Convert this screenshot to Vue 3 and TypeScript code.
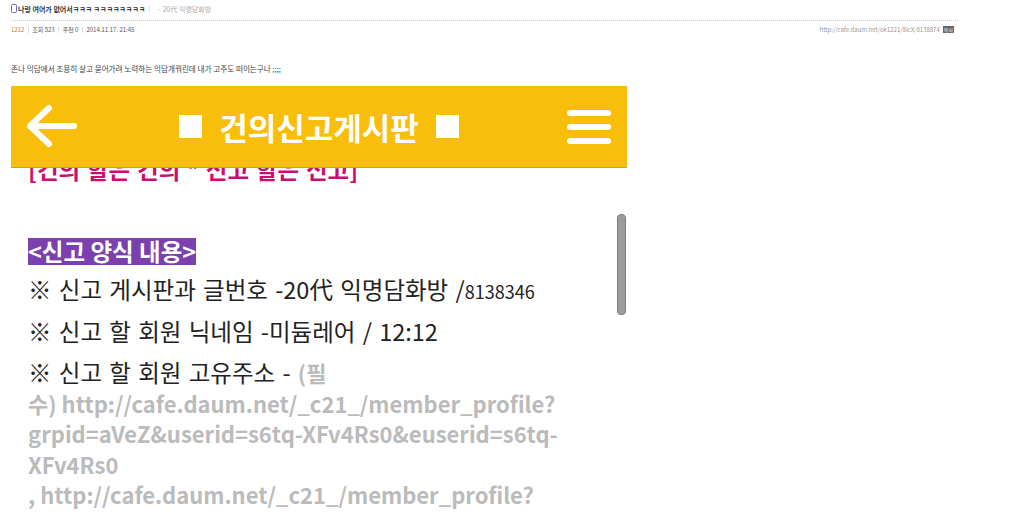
<script setup lang="ts">
const reportLines = [
  { id: 1, text: '※ 신고 게시판과 글번호 -20代 익명담화방 /', extra: '8138346' },
  { id: 2, text: '※ 신고 할 회원 닉네임 -미듐레어 / 12:12', extra: '' },
]
</script>

<template>
  <div class="page">
    <header class="post-head">
      <div class="title-row">
        <svg class="phone" width="6" height="9" viewBox="0 0 6 9"><rect x="0.5" y="0.5" width="5" height="8" rx="1" fill="none" stroke="#5a6fd0" /></svg>
        <strong class="title">나랑 여어가 없어서ㅋㅋㅋ ㅋㅋㅋㅋㅋㅋㅋㅋ</strong>
        <span class="sep"></span>
        <span class="board">· 20代 익명담화방</span>
      </div>
      <div class="meta-row">
        <span class="author">1212</span><i></i>
        <span>조회 523</span><i></i>
        <span>추천 0</span><i></i>
        <span>2014.11.17. 21:45</span>
        <span class="url">http://cafe.daum.net/ok1221/8lcX/8138874</span>
        <span class="copy">복사</span>
      </div>
    </header>

    <p class="intro">존나 익담에서 조용히 살고 묻어가려 노력하는 익담개꿔린데 내가 고주도 떠이는구나 ;;;;</p>

    <div class="viewer">
      <div class="appbar">
        <svg class="back" width="52" height="44" viewBox="0 0 52 44">
          <path d="M22 3 L3 21 L22 39 M3 21 H47" fill="none" stroke="#fff" stroke-width="6" stroke-linecap="round" stroke-linejoin="round" />
        </svg>
        <h1><span class="square"></span>건의신고게시판<span class="square"></span></h1>
        <div class="menu"><b></b><b></b><b></b></div>
      </div>

      <p class="pink">[건의 할은 건의 * 신고 할은 신고]</p>
      <p class="form-label"><span>&lt;신고 양식 내용&gt;</span></p>
      <p v-for="line in reportLines" :key="line.id" class="line">
        {{ line.text }}<small v-if="line.extra">{{ line.extra }}</small>
      </p>
      <p class="line last">
        ※ 신고 할 회원 고유주소 - <em>(필<br />수) http://cafe.daum.net/_c21_/member_profile?<br />grpid=aVeZ&amp;userid=s6tq-XFv4Rs0&amp;euserid=s6tq-<br />XFv4Rs0<br />, http://cafe.daum.net/_c21_/member_profile?</em>
      </p>
      <div class="thumb"></div>
    </div>
  </div>
</template>

<style>
html, body {
  margin: 0;
  background: #fff;
  overflow: hidden;
}
</style>

<style scoped>
.page {
  height: 517px;
  overflow: hidden;
  font-family: "Noto Sans CJK KR", "Noto Sans", sans-serif;
}

.post-head {
  width: 947px;
  padding-left: 11px;
}

.title-row {
  display: flex;
  align-items: center;
  height: 21px;
  padding-bottom: 3px;
  box-sizing: border-box;
  font-size: 7px;
  border-bottom: 1px dotted #ccc;
}

.phone {
  margin-right: 1px;
}

.title {
  color: #333;
  font-size: 7px;
}

.sep {
  width: 1px;
  height: 7px;
  margin: 0 7px 0 4px;
  background: #e4e4e4;
}

.board {
  color: #aaa;
}

.meta-row {
  display: flex;
  align-items: center;
  height: 17px;
  font-size: 6px;
  color: #555;
}

.meta-row i {
  width: 1px;
  height: 6px;
  margin: 0 3.5px;
  background: #ddd;
}

.author {
  color: #f0703c;
}

.url {
  margin-left: auto;
  color: #999;
}

.copy {
  margin: 0 4px 0 3px;
  padding: 0 1px;
  background: #666;
  color: #fff;
  font-size: 5px;
  line-height: 7px;
}

.intro {
  margin: 25px 0 0 11px;
  font-size: 7.6px;
  line-height: 12px;
  color: #444;
}

.viewer {
  position: relative;
  width: 616px;
  margin: 11px 0 0 11px;
  padding: 68px 0 0 17px;
  box-sizing: border-box;
  color: #222;
  font-size: 23.5px;
  word-spacing: 2px;
}

.viewer p {
  margin: 0;
}

.appbar {
  position: absolute;
  top: 0;
  left: 0;
  right: 0;
  display: flex;
  align-items: center;
  justify-content: space-between;
  height: 82px;
  padding: 0 16px;
  box-sizing: border-box;
  background: #f9be09;
  border-bottom: 1px solid #a8a08a;
  z-index: 1;
}

.appbar h1 {
  display: flex;
  align-items: center;
  gap: 17px;
  margin: 0 8px 0 0;
  color: #fff;
  font-size: 31px;
  font-weight: 700;
  word-spacing: 0;
}

.square {
  width: 23px;
  height: 23px;
  background: #fff;
}

.menu {
  display: flex;
  flex-direction: column;
  gap: 8px;
}

.menu b {
  display: block;
  width: 44px;
  height: 6px;
  border-radius: 3px;
  background: #fff;
}

.pink {
  height: 37px;
  line-height: 30px;
  color: #c90e6f;
  font-weight: 700;
  word-spacing: 1.5px;
}

.form-label {
  height: 27px;
  margin: 43px 0 14px !important;
  font-weight: 700;
  word-spacing: 0;
}

.form-label span {
  display: inline-block;
  line-height: 27px;
  background: #7b3fae;
  color: #fff;
}

.line {
  margin-top: 11px !important;
  line-height: 29px;
}

.line small {
  font-size: 18px;
}

.last {
  line-height: 30.6px;
}

.last em {
  color: #bbb;
  font-size: 22px;
  font-style: normal;
  font-weight: 700;
  word-spacing: 0;
}

.thumb {
  position: absolute;
  top: 128px;
  left: 606px;
  width: 9px;
  height: 101px;
  border-radius: 4px;
  background: #9c9c9c;
  border: 1px solid #7c7c7c;
  box-sizing: border-box;
  z-index: 1;
}
</style>
